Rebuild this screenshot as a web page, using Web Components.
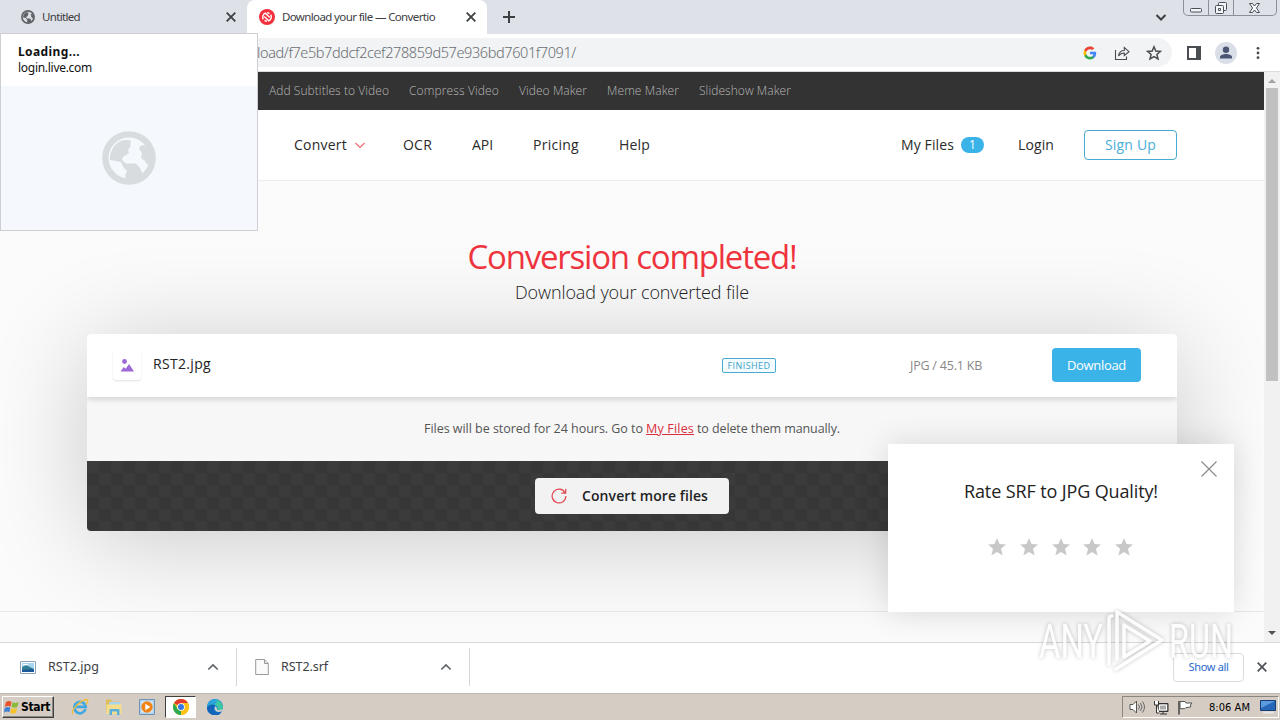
<!DOCTYPE html>
<html lang="en">
<head>
<meta charset="utf-8">
<title>Download your file — Convertio</title>
<style>
  body {
    margin: 0;
    width: 1280px;
    height: 720px;
    overflow: hidden;
    position: relative;
    display: flex;
    flex-direction: column;
    background: #fff;
    font-family: "Open Sans", sans-serif;
  }
</style>
</head>
<body>
<tab-strip></tab-strip>
<address-bar></address-bar>
<page-view>
  <top-links></top-links>
  <site-header></site-header>
  <conversion-result></conversion-result>
</page-view>
<download-shelf></download-shelf>
<task-bar></task-bar>
<hover-card></hover-card>
<rate-popup></rate-popup>
<water-mark></water-mark>

<script>
const ICONS = {
  globe: ['0 0 54 54', '<circle cx="27" cy="27" r="23.6" fill="none" stroke="currentColor" stroke-width="6.4"/><path fill="currentColor" d="M8 26C9 17 15 10 22 9L29 9.5 28 16 26 19 27 22 21 26 20 29 24 32.500H34L38 37 41 43 34 49 25 49 23 45 25 40 22 37 19 31 14 30 8 29zM38 15L42 14 49 20 50 27 45 34 43 30 39 27 40 22 37 18z"/>'],
  close: ['0 0 16 16', '<path d="M3.700 3.700L12.300 12.300M12.300 3.700L3.700 12.300" stroke="currentColor" stroke-width="1.800"/>'],
  plus: ['0 0 16 16', '<path d="M8 2v12M2 8h12" stroke="currentColor" stroke-width="2"/>'],
  down: ['0 0 16 16', '<path d="M3.500 6L8 10.500 12.500 6" fill="none" stroke="currentColor" stroke-width="2"/>'],
  up: ['0 0 16 16', '<path d="M3.300 10.500L8 6 12.700 10.500" fill="none" stroke="currentColor" stroke-width="1.700"/>'],
  convertio: ['0 0 16 16', '<circle cx="8" cy="8" r="8" fill="#f4303c"/><path d="M4.300 10.300A4.300 4.300 0 0 1 6.200 4.200L10.800 8.600M11.700 5.700A4.300 4.300 0 0 1 9.800 11.800L5.200 7.400M8 3.700L10.500 4.500M8 12.300L5.500 11.500" fill="none" stroke="#fff" stroke-width="1.400"/>'],
  google: ['0 0 24 24', '<path fill="#4285f4" d="M22.560 12.250c0-.780-.070-1.530-.200-2.250H12v4.260h5.920c-.260 1.370-1.040 2.530-2.210 3.310v2.770h3.570c2.080-1.920 3.280-4.740 3.280-8.090z"/><path fill="#34a853" d="M12 23c2.970 0 5.460-.980 7.280-2.660l-3.570-2.770c-.980.660-2.230 1.060-3.710 1.060-2.860 0-5.290-1.930-6.160-4.530H2.180v2.840C3.990 20.530 7.700 23 12 23z"/><path fill="#fbbc05" d="M5.840 14.090c-.220-.660-.350-1.360-.350-2.090s.130-1.430.350-2.090V7.070H2.180C1.430 8.550 1 10.220 1 12s.430 3.450 1.180 4.930l3.660-2.840z"/><path fill="#ea4335" d="M12 5.380c1.620 0 3.060.560 4.210 1.640l3.150-3.150C17.450 2.090 14.970 1 12 1 7.700 1 3.990 3.470 2.180 7.070l3.660 2.840c.870-2.600 3.300-4.530 6.160-4.530z"/>'],
  share: ['0 0 16 16', '<path d="M1.500 5v9.500h11V11.500M4.500 11C5 7.500 7 5.500 10.300 5.500V2.500L15 6.700 10.300 10.500V8C8 8 6 9 4.500 11z" fill="none" stroke="currentColor" stroke-width="1.100"/>'],
  starline: ['0 0 16 16', '<path d="M8 1.800L9.800 6l4.600.400-3.500 3 1.100 4.500L8 11.500 4 13.900l1.100-4.500-3.500-3L6.200 6z" fill="none" stroke="currentColor" stroke-width="1.500"/>'],
  star: ['0 0 18 18', '<path d="M9 0l2.500 6 6.500.500-5 4.200L14.600 17.500 9 14l-5.600 3.500L5 10.700 0 6.500 6.500 6z" fill="currentColor"/>'],
  panel: ['0 0 14 14', '<path d="M1 1h12v12H1z" fill="none" stroke="currentColor" stroke-width="2"/><path d="M9 1h4v12H9z" fill="currentColor"/>'],
  person: ['0 0 22 22', '<circle cx="11" cy="11" r="11" fill="#dadee6"/><circle cx="11" cy="7.800" r="3.200" fill="#4b5675"/><path d="M5 16.500v-1.500c0-2 3.500-3 6-3s6 1 6 3v1.500z" fill="#4b5675"/>'],
  dots: ['0 0 16 16', '<circle cx="8" cy="2.700" r="1.600" fill="currentColor"/><circle cx="8" cy="8" r="1.600" fill="currentColor"/><circle cx="8" cy="13.300" r="1.600" fill="currentColor"/>'],
  chevron: ['0 0 12 8', '<path d="M1.500 2L6 6.500 10.500 2" fill="none" stroke="currentColor" stroke-width="1.200"/>'],
  refresh: ['0 0 16 16', '<path d="M14 4.600A6.900 6.900 0 1 0 14.900 8M14.700.800V5.200H10.300" fill="none" stroke="currentColor" stroke-width="1.200"/>'],
  cross: ['0 0 16 16', '<path d="M.500.500L15.500 15.500M15.500.500L.500 15.500" stroke="currentColor" stroke-width="1.100"/>'],
  picture: ['0 0 16 14', '<circle cx="4.800" cy="2.700" r="2.600" fill="currentColor"/><path d="M.500 13.500L4 8.500l2 2 3.700-5L15 13.500z" fill="currentColor"/>'],
  jpg: ['0 0 16 13', '<path d="M.500.500h15v12H.500z" fill="#fff" stroke="#8da3b4"/><path d="M2 2h12v9H2z" fill="#a8d5f0"/><path d="M2 6c3-1 4-2 6-1l6 3v3H2z" fill="#337f91"/><path d="M2 9l12-1v3H2z" fill="#1c5798"/><path d="M3 3h5v1H3z" fill="#fff"/>'],
  file: ['0 0 14 16', '<path d="M.700.500h9l3.600 3.700v11.300H.700z" fill="#fafafa" stroke="#999"/><path d="M9.500.500v4h3.800" fill="#e3e3e3" stroke="#999"/>'],
  windows: ['0 0 16 16', '<path d="M2 2.500Q5 0 8 2L7 7Q4 5.500.800 7.500z" fill="#e8542a"/><path d="M9 2.500Q12 4 15.500 2L14.200 7.500Q11 9 8 7.300z" fill="#8abb35"/><path d="M.700 8.500Q4 6.800 6.800 8.200L5.700 13Q3 11.500 0 13.500z" fill="#3e82d4"/><path d="M7.700 8.500Q11 10.200 14 8.700L12.700 13.500Q9.500 15.500 6.500 13.500z" fill="#f8c22b"/>'],
  ie: ['0 0 18 18', '<path d="M14.500 11.200A5.700 5.700 0 1 1 14.700 8.800H4.500" fill="none" stroke="#41a9e2" stroke-width="2.700"/><path d="M2 16C-1 12 10 2 15.500 1.500 18 1.500 16.500 5 15 6.500" fill="none" stroke="#efbd3a" stroke-width="1.400"/>'],
  folder: ['0 0 18 18', '<path d="M1 1.500h5l1 2h7v10H1z" fill="#dfbc58"/><path d="M4 4h11v7H4z" fill="#a9d4ee"/><path d="M1.500 6.500H16.500V16H1.500z" fill="#f4de8b"/><path d="M4.500 17v-5q0-1 1-1h8q1 0 1 1v5H12v-3.500H7V17z" fill="#5aaedd"/>'],
  media: ['0 0 16 16', '<path d="M.500.500h15v15H.500z" fill="#b3d2ee" stroke="#6d94b8"/><path d="M2.500 2.500h11v11h-11z" fill="#dcebf7"/><circle cx="8" cy="8" r="5.700" fill="#f08418"/><path d="M6.300 4.800L11.300 8 6.300 11.200z" fill="#fff"/>'],
  chrome: ['0 0 16 16', '<circle cx="8" cy="8" r="8" fill="#fbc116"/><path d="M8 8L1.070 4A8 8 0 0 1 14.930 4H8z" fill="#e33b2e"/><path d="M1.070 4L4.540 10 8 11.900 8 16A8 8 0 0 1 1.070 4z" fill="#2da94f"/><path d="M14.930 4A8 8 0 0 1 8 16L11.500 10 11 4z" fill="#fbc116"/><circle cx="8" cy="8" r="3.800" fill="#fff"/><circle cx="8" cy="8" r="3" fill="#3477e4"/>'],
  edge: ['0 0 16 16', '<circle cx="8" cy="8" r="8" fill="#168ad3"/><path d="M.500 6A8 8 0 0 1 16 8C16 11 13 12 10.500 11 11.500 8 9 5.500 6 5.500 3.500 5.500 1.500 6.500.500 8z" fill="#3fc7a4"/><path d="M.500 6A8 8 0 0 1 9 .060C11 2 9 5.500 6 5.500 3.500 5.500 1.500 6.500.500 8z" fill="#2ba5da"/><path d="M0 8C2 5 7 4.500 8.500 7 6 8 6 13 11 13.500Q13 13.500 15 12.300A8 8 0 0 1 0 8z" fill="#1465ba"/><path d="M8.500 7Q10.500 9 10 10.500 12 12 16 10L14.800 12.300Q10 14 8 11 7 9 8.500 7z" fill="#d6d0c8"/>'],
  sound: ['0 0 16 14', '<path d="M1 4.500h3L7.500 1v12L4 9.500H1z" fill="#fff" stroke="#555"/><path d="M9.500 4.500q2 2.500 0 5M11.500 3q3 4 0 8M13.500 1.500q4 5.500 0 11" fill="none" stroke="#666"/>'],
  network: ['0 0 16 15', '<path d="M5 3.500h10v8H5z" fill="#8b8b8b" stroke="#333"/><path d="M6.500 5h7v5h-7z" fill="#aaa" stroke="#fff"/><path d="M7 14h7M10 12v2" stroke="#333"/><path d="M1.500 1v4h4V1M3.500 5v8h3" stroke="#333" fill="#fff"/>'],
  flag: ['0 0 16 15', '<path d="M1.500 1v13.500" stroke="#444" stroke-width="1.500"/><path d="M2.500 1.500h5l1 1.500h6l-1.500 2 .200 2-5 .700-1 1H2.500z" fill="#fff" stroke="#555"/>'],
  desktop: ['0 0 16 14', '<path d="M.500.500h15v10H.500z" fill="#2767b8" stroke="#163d78"/><path d="M1 1h14L1 8z" fill="#5b9be0"/><path d="M3 12.500h11" stroke="#e6e6e6" stroke-width="2"/>']
};

class UiIcon extends HTMLElement {
  connectedCallback() {
    const [box, body] = ICONS[this.getAttribute('name')];
    const w = this.getAttribute('w') || 16;
    const h = this.getAttribute('h') || w;
    this.attachShadow({ mode: 'open' });
    this.shadowRoot.innerHTML = `
      <style>
        :host { display: block; flex: none; width: ${w}px; height: ${h}px; }
        svg { display: block; }
      </style>
      <svg width="${w}" height="${h}" viewBox="${box}">${body}</svg>
    `;
  }
}
customElements.define('ui-icon', UiIcon);

// One-line label that spreads its letters over the width given in "w".
class FitLabel extends HTMLElement {
  connectedCallback() {
    this.attachShadow({ mode: 'open' });
    this.shadowRoot.innerHTML = `
      <style>
        :host { display: block; flex: none; white-space: nowrap; }
        span { display: inline-block; text-decoration: inherit; }
      </style>
      <span><slot></slot></span>
    `;
    const width = Number(this.getAttribute('w'));
    const span = this.shadowRoot.querySelector('span');
    const natural = span.getBoundingClientRect().width;
    span.style.letterSpacing = (width - natural) / this.textContent.length + 'px';
    this.style.width = width + 'px';
  }
}
customElements.define('fit-label', FitLabel);

// Attaches an open shadow root with the given markup.
function defineView(name, markup) {
  customElements.define(name, class extends HTMLElement {
    constructor() {
      super();
      this.attachShadow({ mode: 'open' });
      this.shadowRoot.innerHTML = markup;
    }
  });
}

defineView('tab-strip', `
  <style>
    :host { display: flex; height: 34px; flex: none; background: #dee1e8; color: #3c4043;
      font: 11.5px "Noto Sans", sans-serif; }
    .tab { display: flex; align-items: center; box-sizing: border-box; height: 34px; padding-bottom: 1px; }
    .first { width: 247px; padding-left: 21px; }
    .active { width: 240px; padding-left: 12px; background: #fff; border-radius: 8px 8px 0 0; }
    .first fit-label { margin-left: 7px; }
    .active fit-label { margin-left: 7px; }
    .first ui-icon:last-child { margin-left: 143px; }
    .active ui-icon:last-child { margin-left: 28px; }
    .plus { margin: 9px 0 0 14px; }
    .more { margin: 9px 14px 0 auto; }
    .win { display: flex; height: 16px; margin-right: 3px; border: 1px solid #8b8f97; border-top: 0;
      border-radius: 0 0 5px 5px; box-sizing: border-box; width: 94px; }
    .win svg { display: block; }
  </style>
  <div class="tab first"><ui-icon name="globe" w="14" style="color:#5f6368"></ui-icon>
    <fit-label w="38">Untitled</fit-label><ui-icon name="close" w="16"></ui-icon></div>
  <div class="tab active"><ui-icon name="convertio"></ui-icon>
    <fit-label w="153">Download your file — Convertio</fit-label><ui-icon name="close" w="16"></ui-icon></div>
  <ui-icon class="plus" name="plus"></ui-icon>
  <ui-icon class="more" name="down"></ui-icon>
  <div class="win"><svg width="92" height="15" fill="#f4f5f7" stroke="#4a4e57">
    <path d="M24.500 0v15M49.500 0v15" stroke="#8b8f97"/>
    <rect x="6.500" y="8.500" width="11" height="3.500" rx="1"/>
    <rect x="34.500" y="2.500" width="8" height="8" rx="1"/><rect x="31.500" y="5.500" width="8" height="8" rx="1"/><path d="M34.500 8.500h2v2h-2z"/>
    <path d="M65.500 3.500h3l2 2.500 2-2.500h3l-3 4.500 3 4.500h-3l-2-2.500-2 2.500h-3l3-4.500z"/>
  </svg></div>
`);

defineView('address-bar', `
  <style>
    :host { display: flex; align-items: center; height: 38px; flex: none; box-sizing: border-box; background: #fff;
      border-bottom: 1px solid #dadce0; color: #4a4d51; font: 14.5px "Noto Sans", sans-serif; }
    .box { display: flex; align-items: center; width: 1172px; height: 29px; background: #f1f3f4;
      border-radius: 0 15px 15px 0; box-sizing: border-box; padding: 0 10px 0 257px; }
    fit-label { margin: 0 auto 1px 0; color: #6a6e73; font-weight: 300; }
    .box ui-icon { margin-left: 16px; }
    .side { display: flex; align-items: center; margin-left: 15px; gap: 14px; }
  </style>
  <div class="box"><fit-label w="319">load/f7e5b7ddcf2cef278859d57e936bd7601f7091/</fit-label>
    <ui-icon name="google" w="14" style="margin-right:1px"></ui-icon><ui-icon name="share"></ui-icon><ui-icon name="starline"></ui-icon></div>
  <div class="side"><ui-icon name="panel" w="14"></ui-icon>
    <ui-icon name="person" w="22"></ui-icon>
    <ui-icon name="dots" w="14"></ui-icon></div>
`);

defineView('page-view', `
  <style>
    :host { display: flex; height: 570px; flex: none; isolation: isolate; }
    .page { width: 1264px; height: 570px; overflow: hidden; display: flex; flex-direction: column; background: #fbfbfb; }
    .bar { width: 16px; background: #f1f1f1; display: flex; flex-direction: column; align-items: center; }
    .up { border: 4px solid transparent; border-top: 0; border-bottom: 4px solid #a3a3a3; margin-top: 7px; }
    .thumb { width: 12px; height: 293px; background: #c1c1c1; margin-top: 5px; }
    .down { border: 4px solid transparent; border-bottom: 0; border-top: 4px solid #505050; margin: auto 0 7px; }
  </style>
  <div class="page"><slot></slot></div>
  <div class="bar"><div class="up"></div><div class="thumb"></div><div class="down"></div></div>
`);

defineView('top-links', `
  <style>
    :host { display: flex; align-items: center; gap: 20px; height: 38px; flex: none; padding: 0 0 2px 269px;
      box-sizing: border-box; background: #333; color: #b8b8b8; font-size: 12px; font-weight: 300; }
  </style>
  <fit-label w="120">Add Subtitles to Video</fit-label>
  <fit-label w="90">Compress Video</fit-label>
  <fit-label w="68">Video Maker</fit-label>
  <fit-label w="72">Meme Maker</fit-label>
  <fit-label w="92">Slideshow Maker</fit-label>
`);

defineView('site-header', `
  <style>
    :host { display: flex; align-items: center; height: 71px; flex: none; box-sizing: border-box; padding: 0 87px 0 294px;
      position: relative; z-index: 1; background: #fff; border-bottom: 1px solid #ececec; color: #2b2b2b; font-size: 14px; }
    nav { display: flex; gap: 40px; }
    fit-label { margin-bottom: 2px; }
    .convert { display: flex; align-items: center; gap: 7px; width: 69px; color: #2b2b2b; }
    .convert ui-icon { color: #f26b70; }
    .files { display: flex; align-items: center; gap: 7px; margin: 0 34px 0 auto; }
    .count { width: 23px; height: 16px; border-radius: 8px; background: #3ab3e8; color: #fff; font-size: 12px;
      line-height: 16px; text-align: center; }
    .signup { display: flex; align-items: center; justify-content: center; width: 93px; height: 30px; margin-left: 30px;
      box-sizing: border-box; border: 1px solid #4aa9d0; border-radius: 4px; color: #4aaed8; }
  </style>
  <nav>
    <div class="convert"><fit-label w="53">Convert</fit-label><ui-icon name="chevron" w="12" h="8"></ui-icon></div>
    <fit-label w="29">OCR</fit-label>
    <fit-label w="21">API</fit-label>
    <fit-label w="46">Pricing</fit-label>
    <fit-label w="31">Help</fit-label>
  </nav>
  <div class="files"><fit-label w="53">My Files</fit-label><div class="count">1</div></div>
  <fit-label w="36">Login</fit-label>
  <div class="signup"><fit-label w="51">Sign Up</fit-label></div>
`);

defineView('conversion-result', `
  <style>
    :host { display: flex; flex-direction: column; align-items: center; height: 431px; flex: none; box-sizing: border-box;
      border-bottom: 1px solid #e8e8e8; background: #fbfbfb; }
    h1 { margin: 54px 0 0; color: #f0343e; font-size: 33px; font-weight: 400; line-height: 44px; }
    h2 { margin: 0; color: #222; font-size: 18px; font-weight: 300; line-height: 26px; }
    .card { width: 1090px; height: 197px; margin-top: 29px; border-radius: 4px; background: #f7f7f7;
      box-shadow: 0 10px 100px rgba(0, 0, 0, .2); }
    .row { display: flex; align-items: center; height: 63px; background: #fff; border-radius: 4px 4px 0 0;
      box-shadow: 0 2px 6px rgba(0, 0, 0, .16); clip-path: inset(0 0 -12px 0); padding: 0 0 1px 26px; box-sizing: border-box; }
    .thumb { width: 28px; height: 30px; display: flex; align-items: center; justify-content: center; color: #9b69d6;
      border-radius: 3px; box-shadow: 0 1px 2px rgba(0, 0, 0, .12); }
    .name { margin: 0 0 3px 12px; color: #222; font-size: 14px; }
    .state { margin: 1px 0 0 511px; width: 54px; height: 15px; box-sizing: border-box; border: 1px solid #4aa9d0; border-radius: 2px;
      color: #3c9fc6; font-size: 9px; display: flex; align-items: center; justify-content: center; background: #f4fcff; }
    .size { margin-left: 134px; color: #888; font-size: 12.500px; }
    .download { margin-left: 70px; width: 89px; height: 34px; border-radius: 4px; background: #3ab3e8; color: #fff; font-size: 13px;
      display: flex; align-items: center; justify-content: center; padding-bottom: 1px; box-sizing: border-box; }
    .note { display: flex; align-items: center; justify-content: center; height: 64px; padding-bottom: 2px; box-sizing: border-box;
      color: #555; font-size: 12.500px; gap: 3px; }
    .note a fit-label { color: #d93040; text-decoration: underline; }
    .more { display: flex; align-items: center; justify-content: center; height: 70px; border-radius: 0 0 4px 4px;
      background: repeating-conic-gradient(#373737 0 25%, #3b3b3b 0 50%) 0 0 / 24px 24px; }
    .button { display: flex; align-items: center; width: 194px; height: 36px; border-radius: 4px; background: #f2f2f2;
      box-sizing: border-box; padding-left: 16px; color: #222; font-size: 14px; font-weight: 600; }
    .button fit-label { margin-bottom: 2px; }
    .button ui-icon { color: #e04852; margin-right: 15px; }
  </style>
  <h1><fit-label w="329">Conversion completed!</fit-label></h1>
  <h2><fit-label w="234">Download your converted file</fit-label></h2>
  <div class="card">
    <div class="row">
      <div class="thumb"><ui-icon name="picture" w="15" h="13"></ui-icon></div>
      <fit-label class="name" w="58">RST2.jpg</fit-label>
      <div class="state"><fit-label w="43">FINISHED</fit-label></div>
      <fit-label class="size" w="72">JPG / 45.1 KB</fit-label>
      <div class="download"><fit-label w="59">Download</fit-label></div>
    </div>
    <div class="note"><fit-label w="219">Files will be stored for 24 hours. Go to</fit-label>
      <a><fit-label w="48">My Files</fit-label></a>
      <fit-label w="143">to delete them manually.</fit-label></div>
    <div class="more"><div class="button"><ui-icon name="refresh" w="16"></ui-icon>
      <fit-label w="126">Convert more files</fit-label></div></div>
  </div>
`);

defineView('download-shelf', `
  <style>
    :host { display: flex; align-items: center; height: 51px; flex: none; box-sizing: border-box; border-top: 1px solid #d5d7da;
      padding-bottom: 2px; background: #fff; color: #3c4043; font: 12.500px "Noto Sans", sans-serif; }
    .item { display: flex; align-items: center; height: 38px; box-sizing: border-box; border-right: 1px solid #d5d7da; }
    .item fit-label { margin: 0 auto 2px 0; }
    .item ui-icon:last-child { color: #5f6368; }
    .one { width: 237px; padding: 0 15px 0 20px; gap: 12px; }
    .two { width: 233px; padding: 0 15px 0 18px; gap: 12px; }
    .all { width: 71px; height: 29px; box-sizing: border-box; border: 1px solid #dadce0; border-radius: 4px; margin: 0 10px 0 auto;
      padding-bottom: 2px; display: flex; align-items: center; justify-content: center; color: #2a6ad0; font-size: 11px; }
    .x { margin-right: 10px; color: #50545a; }
  </style>
  <div class="item one"><ui-icon name="jpg" w="16" h="13"></ui-icon><fit-label w="51">RST2.jpg</fit-label><ui-icon name="up"></ui-icon></div>
  <div class="item two"><ui-icon name="file" w="14" h="16"></ui-icon><fit-label w="47">RST2.srf</fit-label><ui-icon name="up"></ui-icon></div>
  <div class="all"><fit-label w="40">Show all</fit-label></div>
  <ui-icon class="x" name="close" w="16"></ui-icon>
`);

defineView('task-bar', `
  <style>
    :host { display: flex; align-items: center; height: 27px; flex: none; box-sizing: border-box; background: #d5cdc4;
      border-top: 1px solid #bdb9b3; color: #000; font: 11px "DejaVu Sans Condensed", "DejaVu Sans", sans-serif; }
    .start { display: flex; align-items: center; width: 52px; height: 22px; margin-left: 2px; box-sizing: border-box; gap: 2px;
      border: 1px solid; border-color: #fff #404040 #404040 #fff; box-shadow: inset -1px -1px #8a8680; padding-left: 1px;
      font-weight: 700; font-size: 12px; }
    .apps { display: flex; align-items: center; margin-left: 17px; }
    .apps ui-icon { margin-right: 16px; }
    .apps .on { display: flex; align-items: center; justify-content: center; width: 31px; height: 22px; box-sizing: border-box;
      background: #fff; border: 1px solid; border-color: #404040 #fff #fff #404040; margin: 0 11px 0 -6px; }
    .apps .on ui-icon { margin: 0; }
    .tray { display: flex; align-items: center; width: 157px; height: 22px; box-sizing: border-box; margin: 0 1px 0 auto; padding-left: 6px;
      border: 1px solid; border-color: #8a8680 #fff #fff #8a8680; }
    .tray ui-icon { margin-right: 8px; }
  </style>
  <div class="start"><ui-icon name="windows" w="15"></ui-icon><fit-label w="29">Start</fit-label></div>
  <div class="apps"><ui-icon name="ie" w="18"></ui-icon><ui-icon name="folder" w="18"></ui-icon><ui-icon name="media"></ui-icon>
    <div class="on"><ui-icon name="chrome"></ui-icon></div><ui-icon name="edge"></ui-icon></div>
  <div class="tray"><ui-icon name="sound" w="16" h="14"></ui-icon><ui-icon name="network" w="16" h="15"></ui-icon>
    <ui-icon name="flag" w="17" h="15"></ui-icon>
    <fit-label w="41" style="margin:0 10px 0 7px">8:06 AM</fit-label><ui-icon name="desktop" w="16" h="14"></ui-icon></div>
`);

defineView('hover-card', `
  <style>
    :host { position: absolute; left: 0; top: 33px; width: 258px; height: 198px; box-sizing: border-box; display: flex;
      flex-direction: column; background: #fff; border: 1px solid #cdcfd2; color: #111; font: 12px/16px "Noto Sans", sans-serif; }
    .text { height: 42px; padding: 10px 0 0 17px; }
    .title { font-weight: 700; }
    .preview { flex: 1; display: flex; align-items: center; justify-content: center; background: #f5f9fd; color: #d9dcdf; }
  </style>
  <div class="text"><fit-label class="title" w="62">Loading...</fit-label><fit-label w="74">login.live.com</fit-label></div>
  <div class="preview"><ui-icon name="globe" w="54"></ui-icon></div>
`);

defineView('rate-popup', `
  <style>
    :host { position: absolute; left: 888px; top: 444px; width: 346px; height: 168px; display: flex; flex-direction: column;
      align-items: center; background: #fff; box-shadow: 0 0 30px rgba(0, 0, 0, .13); color: #222; font-size: 18px; }
    .x { color: #888; align-self: flex-end; margin: 17px 17px 0 0; }
    .title { line-height: 24px; margin-top: 2px; }
    .stars { display: flex; gap: 13.750px; margin: 35px 1px 0 0; color: #c8c8c8; }
  </style>
  <ui-icon class="x" name="cross" w="16"></ui-icon>
  <fit-label class="title" w="194">Rate SRF to JPG Quality!</fit-label>
  <div class="stars">${'<ui-icon name="star" w="18"></ui-icon>'.repeat(5)}</div>
`);

defineView('water-mark', `
  <style>
    :host { position: absolute; left: 1034px; top: 604px; width: 206px; height: 74px; }
    svg { display: block; filter: drop-shadow(0 0 2px rgba(0, 0, 0, .3)); opacity: .8; }
    text { font: 400 48px Roboto, sans-serif; }
  </style>
  <svg width="206" height="74" fill="#fff" stroke="none">
    <text x="5" y="54" textLength="64" lengthAdjust="spacingAndGlyphs">ANY</text>
    <text x="135" y="54" textLength="64" lengthAdjust="spacingAndGlyphs">RUN</text>
    <g fill="none" stroke="#fff" stroke-width="3.500" stroke-linejoin="round" stroke-linecap="round">
      <path d="M75 60V15q0-3 3-3M83 55V8L128 36 82 65"/>
      <path d="M90 49V21L116 37 90 53z"/>
    </g>
  </svg>
`);
</script>
</body>
</html>
